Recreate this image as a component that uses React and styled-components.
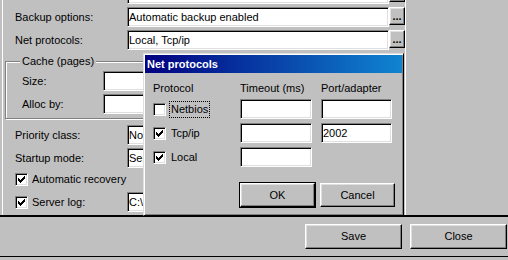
import React from 'react';
import styled, { createGlobalStyle, css } from 'styled-components';

const Global = createGlobalStyle`
  html, body { margin: 0; padding: 0; background: #c0c0c0; overflow: hidden; }
  body { font-family: "Liberation Sans", Arial, sans-serif; font-size: 11px; color: #000; }
  * { box-sizing: border-box; }
`;

const sunken = css`
  border: 1px solid;
  border-color: #808080 #fff #fff #808080;
  box-shadow: inset 1px 1px #000, inset -1px -1px #dfdfdf;
`;

const raised = css`
  border: 1px solid;
  border-color: #fff #000 #000 #fff;
  box-shadow: inset -1px -1px #808080, inset 1px 1px #dfdfdf;
`;

const Window = styled.div`
  position: relative;
  width: 508px;
  height: 260px;
  display: flex;
  flex-direction: column;
  background: #c0c0c0;
  overflow: hidden;
`;

const TopArea = styled.div`
  flex: none;
  height: 217px;
  display: flex;
  border-bottom: 2px solid #000;
`;

const Page = styled.div`
  flex: none;
  width: 404px;
  margin-left: 2px;
  border-left: 1px solid #fff;
  border-right: 1px solid #fff;
  overflow: hidden;
`;

const Form = styled.div`
  margin-top: -16px;
  display: flex;
  flex-direction: column;
`;

const Row = styled.div`
  display: grid;
  grid-template-columns: 112px 1fr;
  align-items: center;
  padding-left: 12px;
  height: 20px;
  margin-top: ${p => p.$mt ?? 3}px;
`;

const Label = styled.span`
  white-space: nowrap;
  line-height: 20px;
`;

const FieldLine = styled.div`
  display: flex;
  align-items: flex-start;
  height: 20px;
`;

const Field = styled.div`
  ${sunken};
  height: 20px;
  background: #fff;
  padding: 0 1px;
  line-height: 18px;
  white-space: nowrap;
  overflow: hidden;
  flex: ${p => (p.$w ? 'none' : '1')};
  width: ${p => (p.$w ? `${p.$w}px` : 'auto')};
`;

const DotsButton = styled.div`
  ${raised};
  flex: none;
  width: 16px;
  height: 18px;
  display: flex;
  justify-content: center;
  align-items: flex-end;
  padding-bottom: 4px;
  font-weight: bold;
  font-size: 11px;
  line-height: 8px;
  letter-spacing: 0;
`;

const Group = styled.div`
  position: relative;
  margin: 11px 0 0 2px;
  width: 380px;
  border: 1px solid #808080;
  box-shadow: inset 1px 1px #fff, 1px 1px #fff;
  padding: 9px 0 4px 16px;
  display: flex;
  flex-direction: column;
  gap: 3px;
`;

const Caption = styled.span`
  position: absolute;
  top: -7px;
  left: 14px;
  padding: 0 2px;
  background: #c0c0c0;
  line-height: 13px;
  white-space: nowrap;
`;

const GroupRow = styled.div`
  display: grid;
  grid-template-columns: 81px 160px;
  align-items: center;
  height: 20px;
`;

const CheckLabel = styled.label`
  display: flex;
  align-items: center;
  gap: ${p => p.$gap ?? 4}px;
  white-space: nowrap;
  line-height: 20px;
`;

const Box = styled.span`
  ${sunken};
  flex: none;
  display: block;
  width: 13px;
  height: 13px;
  background: #fff;
  position: relative;
`;

const Mark = styled.svg`
  position: absolute;
  left: 1px;
  top: 1px;
`;

const CHECK = [
  [6, 0, 1], [5, 1, 2], [0, 2, 1], [4, 2, 3], [0, 3, 2], [3, 3, 3], [0, 4, 5], [1, 5, 3], [2, 6, 1],
];

const Checkbox = ({ checked }) => (
  <Box>
    {checked && (
      <Mark width="9" height="9" viewBox="0 0 9 9" shapeRendering="crispEdges">
        {CHECK.map(([x, y, w], i) => (
          <rect key={i} x={x + 1} y={y + 1} width={w} height={1} fill="#000" />
        ))}
      </Mark>
    )}
  </Box>
);

const Focus = styled.span`
  border: 1px dotted ${p => (p.$focus ? '#000' : 'transparent')};
  padding: 0 1px;
  line-height: 15px;
`;

const Dialog = styled.div`
  position: absolute;
  left: 143px;
  top: 53px;
  width: 261px;
  height: 163px;
  border: 1px solid;
  border-color: #dfdfdf #000 #000 #dfdfdf;
  box-shadow: inset 1px 1px #fff, inset -1px -1px #808080;
  padding: 1px;
  background: #c0c0c0;
  display: flex;
  flex-direction: column;
`;

const TitleBar = styled.div`
  flex: none;
  height: 18px;
  padding-left: 2px;
  background: linear-gradient(to right, #000080, #1084d0);
  color: #fff;
  font-weight: bold;
  font-size: 11px;
  line-height: 18px;
`;

const DialogGrid = styled.div`
  display: grid;
  grid-template-columns: 87px 81px 71px;
  grid-template-rows: 13px 20px 20px 20px;
  row-gap: 4px;
  padding: 9px 0 0 8px;
  align-items: center;
`;

const Head = styled.span`
  line-height: 13px;
  white-space: nowrap;
`;

const ProtoCheck = styled.label`
  display: flex;
  align-items: center;
  gap: 3px;
  white-space: nowrap;
`;

const DialogButtons = styled.div`
  display: flex;
  justify-content: flex-end;
  gap: 5px;
  padding-right: 7px;
  margin-top: 16px;
`;

const Button = styled.div`
  ${raised};
  width: ${p => p.$w}px;
  height: ${p => p.$h}px;
  display: flex;
  align-items: center;
  justify-content: center;
  line-height: 1;
  outline: ${p => (p.$default ? '1px solid #000' : 'none')};
`;

const BottomBar = styled.div`
  flex: none;
  height: 40px;
  display: flex;
  justify-content: flex-end;
  align-items: flex-start;
  gap: 8px;
  padding: 7px 1px 0 0;
  border-bottom: 1px solid #000;
`;

export default function App() {
  return (
    <>
      <Global />
      <Window>
        <TopArea>
          <Page>
            <Form>
              <Row $mt={0}>
                <Label>Temp directory:</Label>
                <FieldLine>
                  <Field>C:\TEMP</Field>
                  <DotsButton>...</DotsButton>
                </FieldLine>
              </Row>
              <Row>
                <Label>Backup options:</Label>
                <FieldLine>
                  <Field>Automatic backup enabled</Field>
                  <DotsButton>...</DotsButton>
                </FieldLine>
              </Row>
              <Row>
                <Label>Net protocols:</Label>
                <FieldLine>
                  <Field>Local, Tcp/ip</Field>
                  <DotsButton>...</DotsButton>
                </FieldLine>
              </Row>
              <Group>
                <Caption>Cache (pages)</Caption>
                <GroupRow>
                  <Label>Size:</Label>
                  <Field />
                </GroupRow>
                <GroupRow>
                  <Label>Alloc by:</Label>
                  <Field />
                </GroupRow>
              </Group>
              <Row $mt={6}>
                <Label>Priority class:</Label>
                <FieldLine>
                  <Field $w={262}>Normal</Field>
                </FieldLine>
              </Row>
              <Row>
                <Label>Startup mode:</Label>
                <FieldLine>
                  <Field $w={262}>Service</Field>
                </FieldLine>
              </Row>
              <Row $mt={1}>
                <CheckLabel>
                  <Checkbox checked />
                  Automatic recovery
                </CheckLabel>
              </Row>
              <Row>
                <CheckLabel>
                  <Checkbox checked />
                  Server log:
                </CheckLabel>
                <FieldLine>
                  <Field $w={262}>C:\server.log</Field>
                </FieldLine>
              </Row>
            </Form>
          </Page>
        </TopArea>
        <BottomBar>
          <Button $w={97} $h={25}>Save</Button>
          <Button $w={97} $h={25}>Close</Button>
        </BottomBar>
        <Dialog>
          <TitleBar>Net protocols</TitleBar>
          <DialogGrid>
            <Head>Protocol</Head>
            <Head>Timeout (ms)</Head>
            <Head>Port/adapter</Head>

            <ProtoCheck>
              <Checkbox />
              <Focus $focus>Netbios</Focus>
            </ProtoCheck>
            <Field $w={72} />
            <Field $w={71} />

            <ProtoCheck>
              <Checkbox checked />
              <Focus>Tcp/ip</Focus>
            </ProtoCheck>
            <Field $w={72} />
            <Field $w={71}>2002</Field>

            <ProtoCheck>
              <Checkbox checked />
              <Focus>Local</Focus>
            </ProtoCheck>
            <Field $w={72} />
            <span />
          </DialogGrid>
          <DialogButtons>
            <Button $w={75} $h={24} $default>OK</Button>
            <Button $w={75} $h={24}>Cancel</Button>
          </DialogButtons>
        </Dialog>
      </Window>
    </>
  );
}
